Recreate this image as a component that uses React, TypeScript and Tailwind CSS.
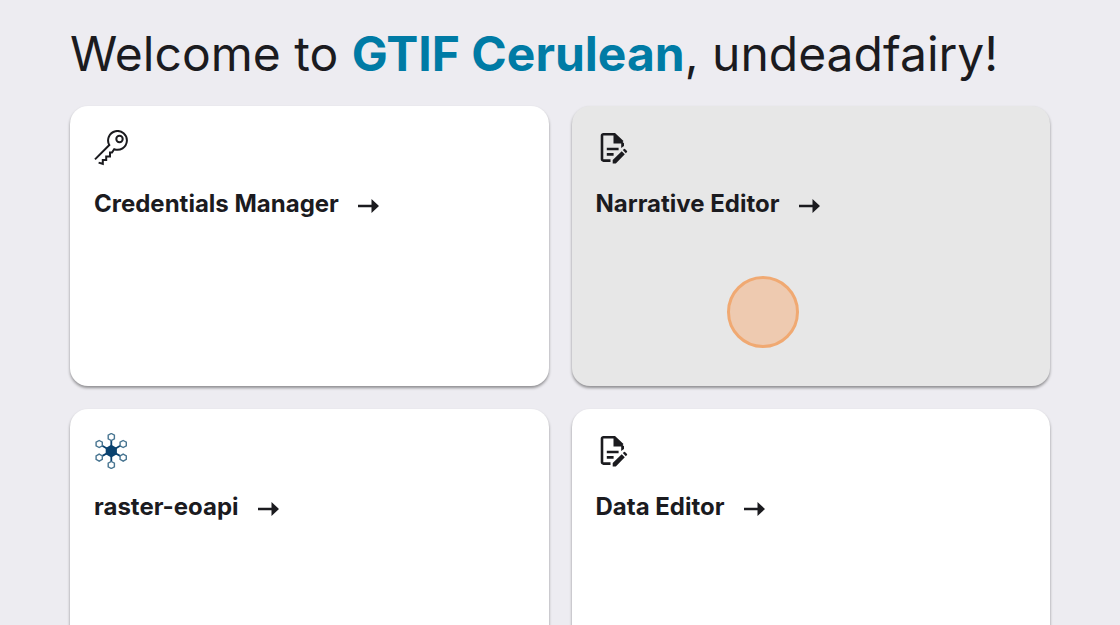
import React from 'react'

function KeyIcon() {
  return (
    <svg className="size-9" viewBox="0 0 36 36" fill="none" stroke="currentColor" strokeWidth="2" aria-hidden="true">
      <path d="M1 29.4 15.3 15A9.4 9.4 0 1 1 20.2 19.2L18 22.6H16V26.4H12.2V30H8.8V33.8L4.6 32.6" />
      <circle cx="25.5" cy="9" r="3.2" />
    </svg>
  )
}

function EditorIcon() {
  return (
    <svg className="size-9" viewBox="0 0 36 36" fill="none" stroke="currentColor" strokeWidth="2.6" aria-hidden="true">
      <path d="M14.5 30.6H7.4A1.4 1.4 0 0 1 6 29.2V5.6A1.4 1.4 0 0 1 7.4 4.2H18.5L26.6 12" />
      <path d="M17.5 4.2 28 13.2V16L25.2 18V13.6H17.5Z" fill="currentColor" stroke="none" />
      <path d="M10.8 19H22.6M10.8 24.4H17.6" />
      <path d="M16.7 33.4V30L25.7 21.2 28.8 24.2 19.8 33.4ZM26.8 20.1 28 19Q28.5 18.6 29 19L31 21Q31.4 21.5 31 22L29.8 23.2Z" fill="currentColor" stroke="none" />
    </svg>
  )
}

function ApiIcon() {
  const nodes = [[17.3, 4], [29.2, 11], [29.2, 24.6], [17.3, 32], [5.2, 24.6], [5.2, 11]]
  return (
    <svg className="size-9" viewBox="0 0 36 36" fill="none" aria-hidden="true">
      {nodes.map(([x, y]) => (
        <g key={`${x}-${y}`} transform={`translate(${x} ${y})`}>
          <path d={`M0 0 ${17.3 - x} ${18 - y}`} stroke="#0a426f" strokeWidth="1.8" />
          <path d="M0-3.5 3.1-1.8V1.8L0 3.5-3.1 1.8V-1.8Z" fill="white" stroke="#487591" strokeWidth="1.4" />
        </g>
      ))}
      <path d="M17.3 11.8 22.9 15V21.2L17.3 24.4 11.7 21.2V15Z" fill="#0a426f" />
    </svg>
  )
}

function Arrow() {
  return (
    <svg className="mt-1 h-4 w-6" viewBox="0 0 24 16" fill="currentColor" aria-hidden="true">
      <path d="M1 6.7H14.5V1L22 8 14.5 15V9.3H1Z" />
    </svg>
  )
}

const apps = [
  { title: 'Credentials Manager', icon: KeyIcon },
  { title: 'Narrative Editor', icon: EditorIcon, active: true },
  { title: 'raster-eoapi', icon: ApiIcon },
  { title: 'Data Editor', icon: EditorIcon },
]

export default function App() {
  return (
    <main className="h-screen overflow-hidden bg-[#edecf1] px-[70px] pt-6 font-['Inter',sans-serif] text-[#1b1b1f]">
      <h1 className="text-5xl leading-[60px] whitespace-nowrap">
        Welcome to <strong className="font-bold text-[#007ba5]">GTIF Cerulean</strong>, undeadfairy!
      </h1>
      <div className="mt-[22px] grid grid-cols-2 gap-[23px]">
        {apps.map(({ title, icon: Icon, active }) => (
          <a
            key={title}
            href="#"
            className={`relative flex min-h-[280px] flex-col rounded-[18px] p-6 shadow-[0_2px_3px_rgba(0,0,0,0.4)] ${
              active ? 'bg-[#e7e7e7]' : 'bg-white'
            }`}
          >
            <Icon />
            <h2 className="mt-[22px] flex items-center gap-[18px] text-2xl font-bold">
              {title}
              <Arrow />
            </h2>
            {/* Click marker */}
            {active && (
              <span className="absolute top-[170px] left-[155px] size-[72px] rounded-full border-3 border-[#f0a972] bg-[#eecab0]" />
            )}
          </a>
        ))}
      </div>
    </main>
  )
}
